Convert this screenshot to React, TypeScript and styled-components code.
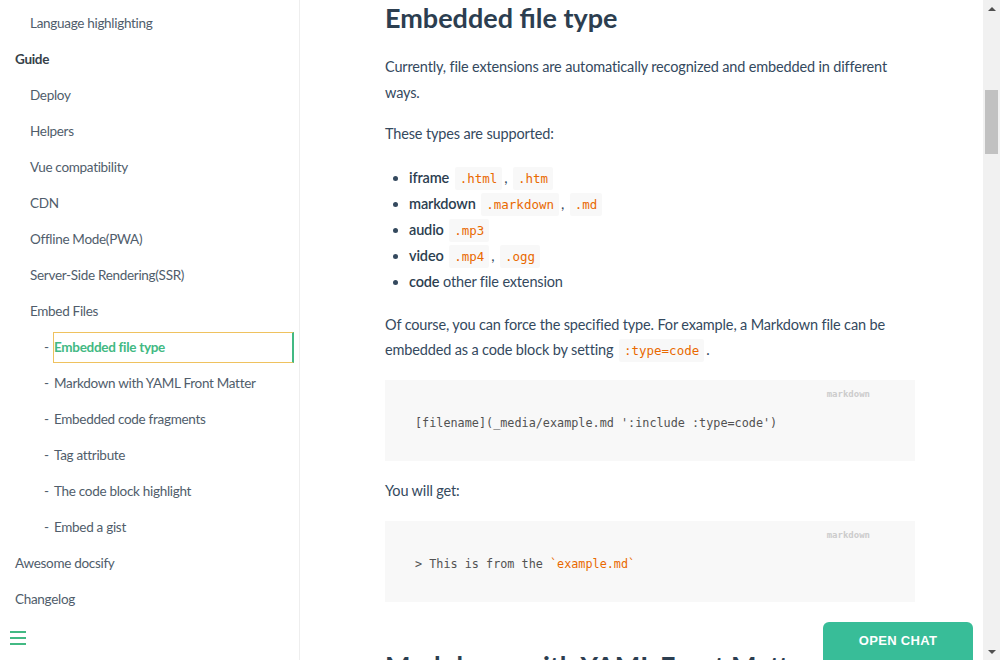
import styled, { createGlobalStyle } from 'styled-components';

const GlobalStyle = createGlobalStyle`
   html, body {
      margin: 0;
      padding: 0;
      overflow: hidden;
   }
   body {
      font-family: Lato, 'Liberation Sans', sans-serif;
      color: #34495e;
      background: #fff;
   }
`;

const sidebarItems = [
   { label: 'Language highlighting', level: 2 },
   { label: 'Guide', level: 1, strong: true },
   { label: 'Deploy', level: 2 },
   { label: 'Helpers', level: 2 },
   { label: 'Vue compatibility', level: 2 },
   { label: 'CDN', level: 2 },
   { label: 'Offline Mode(PWA)', level: 2 },
   { label: 'Server-Side Rendering(SSR)', level: 2 },
   { label: 'Embed Files', level: 2 },
   { label: 'Embedded file type', level: 3, active: true },
   { label: 'Markdown with YAML Front Matter', level: 3 },
   { label: 'Embedded code fragments', level: 3 },
   { label: 'Tag attribute', level: 3 },
   { label: 'The code block highlight', level: 3 },
   { label: 'Embed a gist', level: 3 },
   { label: 'Awesome docsify', level: 1 },
   { label: 'Changelog', level: 1 },
];

const App = () => {
   return (
      <>
         <GlobalStyle />
         <Page>
            <Sidebar>
               <Nav>
                  {sidebarItems.map((item) => (
                     <NavItem key={item.label} $level={item.level}>
                        {item.level === 3 && <Dash>-</Dash>}
                        <NavLink $active={!!item.active} $strong={!!item.strong}>
                           {item.label}
                        </NavLink>
                     </NavItem>
                  ))}
               </Nav>
               <Toggle aria-label='toggle sidebar'>
                  <span />
                  <span />
                  <span />
               </Toggle>
            </Sidebar>

            <Main>
               <Content>
                  <Heading>Embedded file type</Heading>
                  <Para $top={18}>
                     Currently, file extensions are automatically recognized and
                     embedded in different ways.
                  </Para>
                  <Para $top={16}>These types are supported:</Para>
                  <List>
                     <li>
                        <b>iframe</b> <Code>.html</Code>, <Code>.htm</Code>
                     </li>
                     <li>
                        <b>markdown</b> <Code>.markdown</Code>, <Code>.md</Code>
                     </li>
                     <li>
                        <b>audio</b> <Code>.mp3</Code>
                     </li>
                     <li>
                        <b>video</b> <Code>.mp4</Code>, <Code>.ogg</Code>
                     </li>
                     <li>
                        <b>code</b> other file extension
                     </li>
                  </List>
                  <Para $top={17}>
                     Of course, you can force the specified type. For example, a
                     Markdown file can be embedded as a code block by setting{' '}
                     <Code>:type=code</Code>.
                  </Para>
                  <Pre>
                     <Lang>markdown</Lang>
                     [filename](_media/example.md ':include :type=code')
                  </Pre>
                  <Para $top={17}>You will get:</Para>
                  <Pre>
                     <Lang>markdown</Lang>
                     &gt; This is from the <Tick>`example.md`</Tick>
                  </Pre>
                  <NextHeading>Markdown with YAML Front Matter</NextHeading>
               </Content>
            </Main>

            <Scrollbar>
               <Arrow $dir='up' />
               <Track>
                  <Thumb />
               </Track>
               <Arrow $dir='down' />
            </Scrollbar>

            <ChatButton type='button'>OPEN CHAT</ChatButton>
         </Page>
      </>
   );
};

export default App;

const Page = styled.div`
   position: relative;
   display: flex;
   width: 1000px;
   height: 660px;
   overflow: hidden;
`;

const Sidebar = styled.aside`
   display: flex;
   flex-direction: column;
   width: 299px;
   flex-shrink: 0;
   border-right: 1px solid #eee;
   background: #fff;
`;

const Nav = styled.ul`
   list-style: none;
   margin: 0;
   padding: 5px 0 0;
   flex: 1;
   overflow: hidden;
`;

const NavItem = styled.li<{ $level: number }>`
   display: flex;
   align-items: center;
   height: 36px;
   padding-left: ${(p) => p.$level * 15 - 1}px;
   font-size: 13.5px;
   letter-spacing: -0.3px;
`;

const Dash = styled.span`
   width: 9px;
   color: #505d6b;
`;

const NavLink = styled.span<{ $active: boolean; $strong: boolean }>`
   display: flex;
   align-items: center;
   height: 29px;
   flex: ${(p) => (p.$active ? 1 : 'none')};
   margin-right: 5px;
   border: 1px solid ${(p) => (p.$active ? '#efc25f' : 'transparent')};
   border-right: 2px solid ${(p) => (p.$active ? '#42b983' : 'transparent')};
   color: ${(p) => (p.$active ? '#42b983' : p.$strong ? '#364149' : '#505d6b')};
   font-weight: ${(p) => (p.$active || p.$strong ? 700 : 400)};
   white-space: nowrap;
`;

const Toggle = styled.div`
   display: flex;
   flex-direction: column;
   gap: 4px;
   padding: 0 0 15px 10px;

   span {
      display: block;
      width: 16px;
      height: 2px;
      background: #42b983;
   }
`;

const Main = styled.main`
   flex: 1;
   min-width: 0;
   overflow: hidden;
`;

const Content = styled.article`
   width: 530px;
   margin-left: 85px;
   font-size: 14.5px;
   letter-spacing: -0.15px;
   line-height: 25.6px;
`;

const Heading = styled.h2`
   margin: 0;
   height: 36px;
   line-height: 36px;
   font-size: 27px;
   font-weight: 700;
   letter-spacing: 0;
   color: #2c3e50;
   white-space: nowrap;
`;

const NextHeading = styled(Heading)`
   margin-top: 46px;
`;

const Para = styled.p<{ $top: number }>`
   margin: ${(p) => p.$top}px 0 0;
`;

const List = styled.ul`
   margin: 18px 0 0;
   padding-left: 24px;
   line-height: 26px;

   b {
      font-weight: 600;
      color: #2c3e50;
   }
`;

const Code = styled.code`
   font-family: 'DejaVu Sans Mono', 'Liberation Mono', monospace;
   font-size: 12.5px;
   line-height: 1;
   letter-spacing: 0;
   color: #e96900;
   background: #f8f8f8;
   padding: 4px 5px;
   margin: 0 2px;
   border-radius: 2px;
`;

const Pre = styled.pre`
   position: relative;
   margin: 17px 0 0;
   height: 81px;
   box-sizing: border-box;
   padding: 33px 30px 0;
   background: #f8f8f8;
   font-family: 'DejaVu Sans Mono', 'Liberation Mono', monospace;
   font-size: 11.8px;
   line-height: 20px;
   letter-spacing: 0;
   color: #525252;
`;

const Lang = styled.span`
   position: absolute;
   top: 8px;
   right: 45px;
   font-size: 9px;
   line-height: 12px;
   font-weight: 700;
   color: #ccc;
`;

const Tick = styled.span`
   color: #e96900;
`;

const Scrollbar = styled.div`
   display: flex;
   flex-direction: column;
   width: 17px;
   flex-shrink: 0;
   background: #f1f1f1;
`;

const Track = styled.div`
   flex: 1;
   padding-top: 73px;
`;

const Thumb = styled.div`
   width: 13px;
   height: 64px;
   margin-left: 2px;
   background: #c1c1c1;
`;

const Arrow = styled.div<{ $dir: 'up' | 'down' }>`
   height: 17px;
   display: flex;
   align-items: center;
   justify-content: center;

   &::before {
      content: '';
      width: 0;
      height: 0;
      border-left: 4px solid transparent;
      border-right: 4px solid transparent;
      ${(p) =>
         p.$dir === 'up'
            ? 'border-bottom: 4px solid #505050;'
            : 'border-top: 4px solid #505050;'}
   }
`;

const ChatButton = styled.button`
   position: absolute;
   left: 823px;
   top: 622px;
   width: 150px;
   height: 50px;
   padding: 0 0 14px;
   border: none;
   border-radius: 6px 6px 0 0;
   background: #38bd98;
   color: #fff;
   font-family: 'Liberation Sans', Arial, sans-serif;
   font-size: 13px;
   font-weight: 700;
   letter-spacing: 0.3px;
   cursor: pointer;
`;
